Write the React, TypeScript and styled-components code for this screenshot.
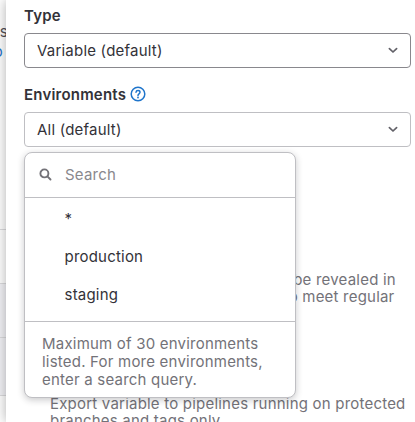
import React from "react";
import styled, { createGlobalStyle } from "styled-components";

const Global = createGlobalStyle`
  * { box-sizing: border-box; }
  body { margin: 0; background: #fff; overflow: hidden; font-family: Inter, "Noto Sans", sans-serif; font-size: 15px; letter-spacing: 0.21px; color: #333238; }
`;

const Page = styled.div`
  display: flex;
  width: 415px;
  height: 422px;
  overflow: hidden;
`;

const Backdrop = styled.aside`
  flex: none;
  width: 6px;
  overflow: hidden;
  background: #fff;
`;

const Peek = styled.div<{ $height: number; $fill?: string; $line?: boolean; $color?: string; $shift?: number }>`
  height: ${(p) => p.$height}px;
  background: ${(p) => p.$fill ?? "#fff"};
  border-top: ${(p) => (p.$line ? "1px solid #dcdcde" : "0")};
  color: ${(p) => p.$color ?? "#535158"};
  line-height: ${(p) => p.$height}px;
  display: flex;
  justify-content: flex-end;
  padding-right: ${(p) => p.$shift ?? 0}px;
`;

const PeekText = styled.span<{ $pull: number }>`
  margin-right: ${(p) => p.$pull}px;
`;

const Drawer = styled.main`
  flex: 1;
  padding: 5px 4px 0 18px;
  background: #fff;
  box-shadow: 0 0 12px rgba(0, 0, 0, 0.32);
  min-width: 0;
`;

const Label = styled.label`
  display: flex;
  align-items: center;
  gap: 4px;
  height: 20px;
  font-weight: 600;
`;

const Select = styled.div<{ $border: string }>`
  display: flex;
  align-items: center;
  justify-content: space-between;
  height: 35px;
  padding: 0 12px;
  border: 1px solid ${(p) => p.$border};
  border-radius: 4px;
`;

const Field = styled.section<{ $top: number }>`
  position: relative;
  margin-top: ${(p) => p.$top}px;
  ${Select} { margin-top: 8px; }
`;

const Menu = styled.div`
  position: absolute;
  left: 0;
  top: 68px;
  width: 272px;
  height: 246px;
  background: #fff;
  border: 1px solid #bfbfc3;
  border-radius: 8px;
  box-shadow: 0 2px 7px rgba(31, 30, 36, 0.24);
`;

const SearchRow = styled.div`
  display: flex;
  align-items: center;
  gap: 13px;
  height: 45px;
  padding: 0 0 1px 14px;
  border-bottom: 1px solid #bfbfc3;
  color: #89888d;
`;

const Options = styled.ul`
  list-style: none;
  margin: 0;
  padding: 2px 0 5px;
  height: 124px;
  border-bottom: 1px solid #bfbfc3;
`;

const Option = styled.li`
  height: 38px;
  padding-left: 39.5px;
  line-height: 37px;
`;

const Footer = styled.div`
  padding: 13px 0 0 17px;
  color: #737278;
  line-height: 18px;
  white-space: nowrap;
`;

const Help = styled.p<{ $top: number }>`
  margin: ${(p) => p.$top}px 0 0 26px;
  color: #737278;
  line-height: 17px;
  white-space: nowrap;
`;

const Chevron = () => (
  <svg width="10" height="7" viewBox="0 0 10 7" fill="none" stroke="#626168" strokeWidth="1.7">
    <path d="M1.4 1.6 5 5 8.6 1.6" strokeLinecap="round" strokeLinejoin="round" />
  </svg>
);

const Question = () => (
  <svg width="16" height="16" viewBox="0 0 16 16" fill="none" stroke="#1f75cb" strokeWidth="1.5">
    <circle cx="8" cy="8" r="6.8" />
    <path d="M6 6.3C6.1 5.2 6.9 4.6 8 4.6s2 .7 2 1.7c0 1.5-2 1.5-2 3.1" strokeLinecap="round" />
    <circle cx="8" cy="11.5" r=".9" fill="#1f75cb" stroke="none" />
  </svg>
);

const Magnifier = () => (
  <svg width="13" height="13" viewBox="0 0 13 13" fill="none" stroke="#737278" strokeWidth="1.9">
    <circle cx="5.4" cy="5.4" r="4" />
    <path d="M8.4 8.4 11.5 11.5" strokeLinecap="round" />
  </svg>
);

export default function App() {
  return (
    <>
      <Global />
      <Page>
        <Backdrop>
          <Peek $height={22} />
          <Peek $height={20}><PeekText $pull={-2}>s</PeekText></Peek>
          <Peek $height={20} $color="#1f75cb"><PeekText $pull={3}>o</PeekText></Peek>
          <Peek $height={167} />
          <Peek $height={54} $line />
          <Peek $height={54} $line $fill="#f3f3f7" />
          <Peek $height={58} $line $fill="#f3f3f7" />
          <Peek $height={27} $line />
        </Backdrop>
        <Drawer>
          <Field $top={0}>
            <Label>Type</Label>
            <Select $border="#89888d">
              <span>Variable (default)</span>
              <Chevron />
            </Select>
          </Field>
          <Field $top={16}>
            <Label>Environments<Question /></Label>
            <Select $border="#bfbfc3">
              <span>All (default)</span>
              <Chevron />
            </Select>
            <Menu>
              <SearchRow><Magnifier /><span>Search</span></SearchRow>
              <Options>
                <Option>*</Option>
                <Option>production</Option>
                <Option>staging</Option>
              </Options>
              <Footer>
                Maximum of 30 environments<br />
                listed. For more environments,<br />
                enter a search query.
              </Footer>
            </Menu>
          </Field>
          <Help $top={124}>
            Masked in job logs but value can be revealed in<br />
            CI/CD settings. Requires values to meet regular<br />
            expressions requirements.
          </Help>
          <Help $top={73}>
            Export variable to pipelines running on protected<br />
            branches and tags only.
          </Help>
        </Drawer>
      </Page>
    </>
  );
}
